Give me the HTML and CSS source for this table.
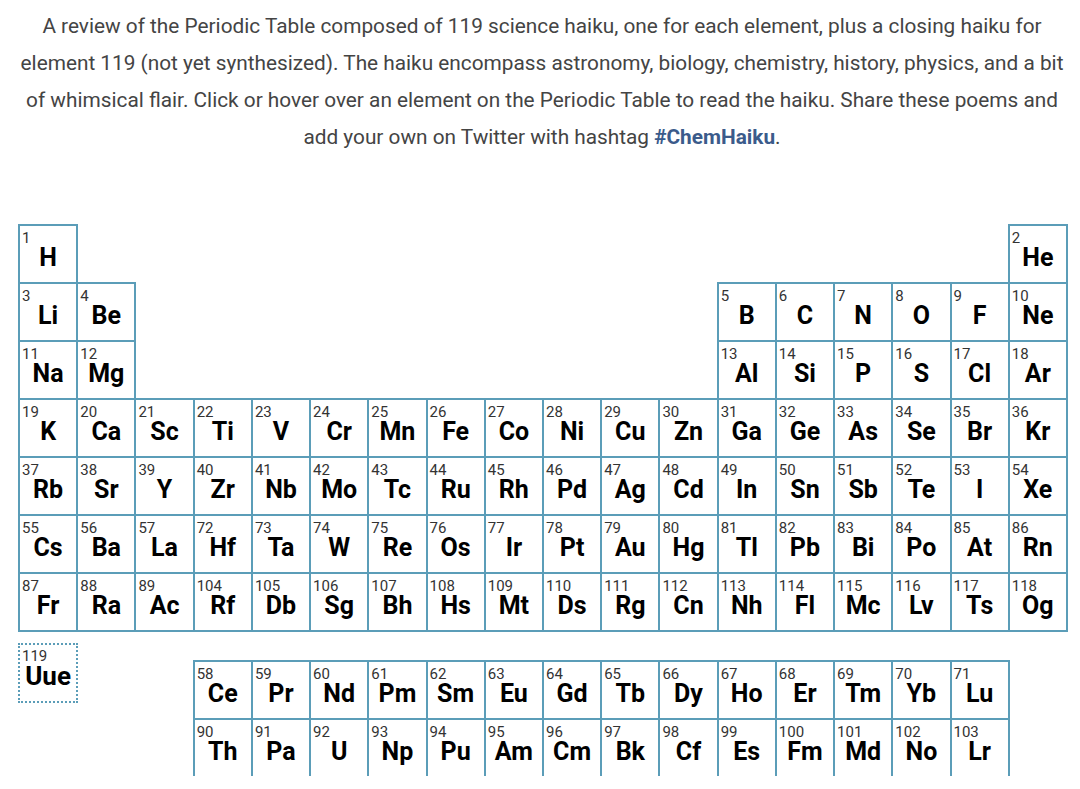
FILE: index.html
```html
<!DOCTYPE html>
<html lang="en">
<head>
<meta charset="utf-8">
<title>Chemistry Haiku</title>
<link rel="stylesheet" href="styles.css">
</head>
<body>
<main class="page">
  <p class="intro">A review of the Periodic Table composed of 119 science haiku, one for each element, plus a closing haiku for element 119 (not yet synthesized). The haiku encompass astronomy, biology, chemistry, history, physics, and a bit of whimsical flair. Click or hover over an element on the Periodic Table to read the haiku. Share these poems and add your own on Twitter with hashtag <a class="tag" href="#">#ChemHaiku</a>.</p>

  <div class="ptable">
    <div class="el"><span class="num">1</span><span class="sym">H</span></div>
    <div class="el c18"><span class="num">2</span><span class="sym">He</span></div>

    <div class="el"><span class="num">3</span><span class="sym">Li</span></div>
    <div class="el"><span class="num">4</span><span class="sym">Be</span></div>
    <div class="el c13"><span class="num">5</span><span class="sym">B</span></div>
    <div class="el"><span class="num">6</span><span class="sym">C</span></div>
    <div class="el"><span class="num">7</span><span class="sym">N</span></div>
    <div class="el"><span class="num">8</span><span class="sym">O</span></div>
    <div class="el"><span class="num">9</span><span class="sym">F</span></div>
    <div class="el"><span class="num">10</span><span class="sym">Ne</span></div>

    <div class="el"><span class="num">11</span><span class="sym">Na</span></div>
    <div class="el"><span class="num">12</span><span class="sym">Mg</span></div>
    <div class="el c13"><span class="num">13</span><span class="sym">Al</span></div>
    <div class="el"><span class="num">14</span><span class="sym">Si</span></div>
    <div class="el"><span class="num">15</span><span class="sym">P</span></div>
    <div class="el"><span class="num">16</span><span class="sym">S</span></div>
    <div class="el"><span class="num">17</span><span class="sym">Cl</span></div>
    <div class="el"><span class="num">18</span><span class="sym">Ar</span></div>

    <div class="el"><span class="num">19</span><span class="sym">K</span></div>
    <div class="el"><span class="num">20</span><span class="sym">Ca</span></div>
    <div class="el"><span class="num">21</span><span class="sym">Sc</span></div>
    <div class="el"><span class="num">22</span><span class="sym">Ti</span></div>
    <div class="el"><span class="num">23</span><span class="sym">V</span></div>
    <div class="el"><span class="num">24</span><span class="sym">Cr</span></div>
    <div class="el"><span class="num">25</span><span class="sym">Mn</span></div>
    <div class="el"><span class="num">26</span><span class="sym">Fe</span></div>
    <div class="el"><span class="num">27</span><span class="sym">Co</span></div>
    <div class="el"><span class="num">28</span><span class="sym">Ni</span></div>
    <div class="el"><span class="num">29</span><span class="sym">Cu</span></div>
    <div class="el"><span class="num">30</span><span class="sym">Zn</span></div>
    <div class="el"><span class="num">31</span><span class="sym">Ga</span></div>
    <div class="el"><span class="num">32</span><span class="sym">Ge</span></div>
    <div class="el"><span class="num">33</span><span class="sym">As</span></div>
    <div class="el"><span class="num">34</span><span class="sym">Se</span></div>
    <div class="el"><span class="num">35</span><span class="sym">Br</span></div>
    <div class="el"><span class="num">36</span><span class="sym">Kr</span></div>

    <div class="el"><span class="num">37</span><span class="sym">Rb</span></div>
    <div class="el"><span class="num">38</span><span class="sym">Sr</span></div>
    <div class="el"><span class="num">39</span><span class="sym">Y</span></div>
    <div class="el"><span class="num">40</span><span class="sym">Zr</span></div>
    <div class="el"><span class="num">41</span><span class="sym">Nb</span></div>
    <div class="el"><span class="num">42</span><span class="sym">Mo</span></div>
    <div class="el"><span class="num">43</span><span class="sym">Tc</span></div>
    <div class="el"><span class="num">44</span><span class="sym">Ru</span></div>
    <div class="el"><span class="num">45</span><span class="sym">Rh</span></div>
    <div class="el"><span class="num">46</span><span class="sym">Pd</span></div>
    <div class="el"><span class="num">47</span><span class="sym">Ag</span></div>
    <div class="el"><span class="num">48</span><span class="sym">Cd</span></div>
    <div class="el"><span class="num">49</span><span class="sym">In</span></div>
    <div class="el"><span class="num">50</span><span class="sym">Sn</span></div>
    <div class="el"><span class="num">51</span><span class="sym">Sb</span></div>
    <div class="el"><span class="num">52</span><span class="sym">Te</span></div>
    <div class="el"><span class="num">53</span><span class="sym">I</span></div>
    <div class="el"><span class="num">54</span><span class="sym">Xe</span></div>

    <div class="el"><span class="num">55</span><span class="sym">Cs</span></div>
    <div class="el"><span class="num">56</span><span class="sym">Ba</span></div>
    <div class="el"><span class="num">57</span><span class="sym">La</span></div>
    <div class="el"><span class="num">72</span><span class="sym">Hf</span></div>
    <div class="el"><span class="num">73</span><span class="sym">Ta</span></div>
    <div class="el"><span class="num">74</span><span class="sym">W</span></div>
    <div class="el"><span class="num">75</span><span class="sym">Re</span></div>
    <div class="el"><span class="num">76</span><span class="sym">Os</span></div>
    <div class="el"><span class="num">77</span><span class="sym">Ir</span></div>
    <div class="el"><span class="num">78</span><span class="sym">Pt</span></div>
    <div class="el"><span class="num">79</span><span class="sym">Au</span></div>
    <div class="el"><span class="num">80</span><span class="sym">Hg</span></div>
    <div class="el"><span class="num">81</span><span class="sym">Tl</span></div>
    <div class="el"><span class="num">82</span><span class="sym">Pb</span></div>
    <div class="el"><span class="num">83</span><span class="sym">Bi</span></div>
    <div class="el"><span class="num">84</span><span class="sym">Po</span></div>
    <div class="el"><span class="num">85</span><span class="sym">At</span></div>
    <div class="el"><span class="num">86</span><span class="sym">Rn</span></div>

    <div class="el"><span class="num">87</span><span class="sym">Fr</span></div>
    <div class="el"><span class="num">88</span><span class="sym">Ra</span></div>
    <div class="el"><span class="num">89</span><span class="sym">Ac</span></div>
    <div class="el"><span class="num">104</span><span class="sym">Rf</span></div>
    <div class="el"><span class="num">105</span><span class="sym">Db</span></div>
    <div class="el"><span class="num">106</span><span class="sym">Sg</span></div>
    <div class="el"><span class="num">107</span><span class="sym">Bh</span></div>
    <div class="el"><span class="num">108</span><span class="sym">Hs</span></div>
    <div class="el"><span class="num">109</span><span class="sym">Mt</span></div>
    <div class="el"><span class="num">110</span><span class="sym">Ds</span></div>
    <div class="el"><span class="num">111</span><span class="sym">Rg</span></div>
    <div class="el"><span class="num">112</span><span class="sym">Cn</span></div>
    <div class="el"><span class="num">113</span><span class="sym">Nh</span></div>
    <div class="el"><span class="num">114</span><span class="sym">Fl</span></div>
    <div class="el"><span class="num">115</span><span class="sym">Mc</span></div>
    <div class="el"><span class="num">116</span><span class="sym">Lv</span></div>
    <div class="el"><span class="num">117</span><span class="sym">Ts</span></div>
    <div class="el"><span class="num">118</span><span class="sym">Og</span></div>
  </div>

  <div class="lower">
    <div class="el uue"><span class="num">119</span><span class="sym">Uue</span></div>
    <div class="series">
      <div class="el"><span class="num">58</span><span class="sym">Ce</span></div>
      <div class="el"><span class="num">59</span><span class="sym">Pr</span></div>
      <div class="el"><span class="num">60</span><span class="sym">Nd</span></div>
      <div class="el"><span class="num">61</span><span class="sym">Pm</span></div>
      <div class="el"><span class="num">62</span><span class="sym">Sm</span></div>
      <div class="el"><span class="num">63</span><span class="sym">Eu</span></div>
      <div class="el"><span class="num">64</span><span class="sym">Gd</span></div>
      <div class="el"><span class="num">65</span><span class="sym">Tb</span></div>
      <div class="el"><span class="num">66</span><span class="sym">Dy</span></div>
      <div class="el"><span class="num">67</span><span class="sym">Ho</span></div>
      <div class="el"><span class="num">68</span><span class="sym">Er</span></div>
      <div class="el"><span class="num">69</span><span class="sym">Tm</span></div>
      <div class="el"><span class="num">70</span><span class="sym">Yb</span></div>
      <div class="el"><span class="num">71</span><span class="sym">Lu</span></div>

      <div class="el"><span class="num">90</span><span class="sym">Th</span></div>
      <div class="el"><span class="num">91</span><span class="sym">Pa</span></div>
      <div class="el"><span class="num">92</span><span class="sym">U</span></div>
      <div class="el"><span class="num">93</span><span class="sym">Np</span></div>
      <div class="el"><span class="num">94</span><span class="sym">Pu</span></div>
      <div class="el"><span class="num">95</span><span class="sym">Am</span></div>
      <div class="el"><span class="num">96</span><span class="sym">Cm</span></div>
      <div class="el"><span class="num">97</span><span class="sym">Bk</span></div>
      <div class="el"><span class="num">98</span><span class="sym">Cf</span></div>
      <div class="el"><span class="num">99</span><span class="sym">Es</span></div>
      <div class="el"><span class="num">100</span><span class="sym">Fm</span></div>
      <div class="el"><span class="num">101</span><span class="sym">Md</span></div>
      <div class="el"><span class="num">102</span><span class="sym">No</span></div>
      <div class="el"><span class="num">103</span><span class="sym">Lr</span></div>
    </div>
  </div>
</main>
</body>
</html>
```

FILE: styles.css
```css
* { box-sizing: border-box; }

html, body {
  margin: 0;
  padding: 0;
  background: #ffffff;
}

body {
  font-family: Roboto, "Liberation Sans", Arial, sans-serif;
  color: #444444;
}

.page {
  width: 1050px;
  margin-left: 18px;
  padding-top: 8px;
}

.intro {
  margin: 0 -4px 0 -6px;
  font-size: 20.8px;
  line-height: 37px;
  text-align: center;
  color: #444444;
}

.tag {
  color: #3b5b8b;
  font-weight: 700;
  text-decoration: none;
}

.ptable {
  margin-top: 68px;
  display: grid;
  grid-template-columns: repeat(18, 58.22px);
  grid-auto-rows: 58px;
}

.el {
  display: flex;
  flex-direction: column;
  margin-right: -2px;
  margin-bottom: -2px;
  border: 2px solid #5b9db8;
  background: #ffffff;
  padding: 4px 0 0 2px;
}

.c13 { grid-column-start: 13; }
.c18 { grid-column-start: 18; }

.num {
  font-size: 15px;
  line-height: 16px;
  color: #333333;
  text-align: left;
}

.sym {
  margin-left: -2px;
  font-size: 25px;
  line-height: 24px;
  font-weight: 700;
  color: #000000;
  text-align: center;
}

.lower {
  margin-top: 13px;
  display: grid;
  grid-template-columns: repeat(18, 58.22px);
  align-items: start;
}

.uue {
  grid-column: 1;
  height: 60px;
  border: 2px dotted #5b9db8;
  padding-top: 3px;
}

.uue .sym {
  font-size: 26px;
}

.series {
  grid-column: 4 / span 14;
  margin-top: 17px;
  display: grid;
  grid-template-columns: repeat(14, 58.22px);
  grid-auto-rows: 58px;
}
```
